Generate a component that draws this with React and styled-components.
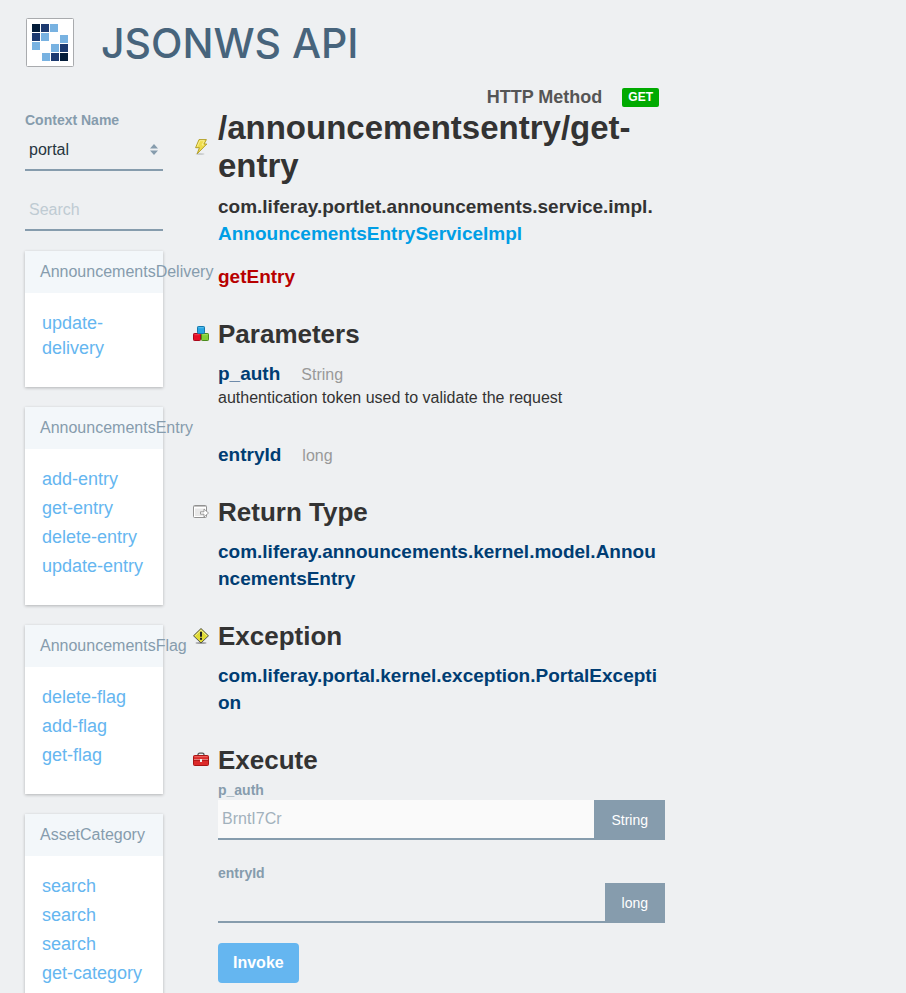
import React from "react";
import styled, { createGlobalStyle } from "styled-components";

const GlobalStyle = createGlobalStyle`
  *, *::before, *::after { box-sizing: border-box; }
  body {
    margin: 0;
    background: #eef0f2;
    color: #333;
    font-family: "Liberation Sans", Arial, sans-serif;
    font-size: 16px;
    line-height: 22px;
  }
  h1, h2, h3, h4, p, ul { margin: 0; padding: 0; }
  button, input, select { font-family: inherit; }
`;

const Page = styled.div`
  padding: 18px 25px 40px;
`;

const Banner = styled.header`
  display: flex;
  align-items: center;
  gap: 27px;
  height: 49px;
  margin-bottom: 18px;
`;

const Logo = styled.svg`
  display: block;
  flex: none;
`;

const SiteTitle = styled.h1`
  color: #47647c;
  font-family: Inter, "Liberation Sans", sans-serif;
  font-size: 41px;
  font-weight: 500;
  line-height: 48px;
`;

const Columns = styled.div`
  display: grid;
  grid-template-columns: minmax(0, 138fr) minmax(0, 472fr) minmax(0, 186fr);
  gap: 30px;
  align-items: start;
`;

const Sidebar = styled.nav`
  display: flex;
  flex-direction: column;
  gap: 20px;
  padding-top: 25px;
`;

const Field = styled.div`
  display: flex;
  flex-direction: column;
`;

const FieldLabel = styled.label`
  color: #869cad;
  font-size: 14px;
  font-weight: 700;
  line-height: 20px;
`;

const SelectBox = styled.div`
  display: grid;
  align-items: center;
  border-bottom: 2px solid #869cad;
  height: 41px;

  & > * { grid-area: 1 / 1; }
  & > svg { justify-self: end; margin-right: 5px; pointer-events: none; }
`;

const Select = styled.select`
  appearance: none;
  width: 100%;
  height: 39px;
  border: 0;
  padding: 0 20px 0 4px;
  background: transparent;
  color: #27353f;
  font-size: 16px;
`;

const TextInput = styled.input`
  width: 100%;
  min-width: 0;
  height: 40px;
  border: 0;
  border-bottom: 2px solid #869cad;
  border-radius: 0;
  padding: 0 4px;
  background: ${(p) => (p.readOnly ? "#fafafa" : "transparent")};
  color: #a2b1bc;
  font-size: 16px;

  &::placeholder { color: #bfcbd3; opacity: 1; }
`;

const Card = styled.section`
  background: #fff;
  box-shadow: 0 1px 3px rgba(0, 0, 0, 0.25);
`;

const CardTitle = styled.h4`
  padding: 0 15px;
  background: #f3f7fa;
  color: #869cad;
  font-size: 16px;
  font-weight: 400;
  line-height: 42px;
  white-space: nowrap;
`;

const LinkList = styled.ul`
  list-style: none;
  padding: 18px 17px 22px;
`;

const LinkItem = styled.li`
  margin-bottom: 4px;
  line-height: 25px;
`;

const NavLink = styled.a`
  color: #65b6f0;
  font-size: 18px;
  text-decoration: none;
`;

const Main = styled.main`
  display: flex;
  flex-direction: column;
  gap: 26px;
`;

const MethodRow = styled.div`
  display: flex;
  align-items: center;
  justify-content: flex-end;
  gap: 20px;
  height: 24px;
  padding-right: 6px;
  color: #555;
  font-size: 18px;
  font-weight: 700;
`;

const Badge = styled.span`
  padding: 0 6px;
  border-radius: 2px;
  background: #0a0;
  color: #fff;
  font-size: 12px;
  line-height: 19px;
`;

const Section = styled.section`
  display: grid;
  grid-template-columns: 16px minmax(0, 1fr);
  column-gap: 9px;
  align-items: center;
`;

const Body = styled.div`
  grid-column: 2;
  padding-top: ${(p) => (p.$tight ? "2px" : "8px")};
`;

const PathTitle = styled.h2`
  font-size: 33px;
  line-height: 38px;
`;

const SectionTitle = styled.h3`
  font-size: 26px;
  line-height: 36px;
`;

const TypeName = styled.h4`
  color: ${(p) => p.$color || "#003d73"};
  font-size: 19px;
  line-height: 27px;
  overflow-wrap: anywhere;

  & + & { margin-top: 16px; }
`;

const ClassLink = styled.a`
  display: block;
  color: #009ee5;
  text-decoration: none;
`;

const Param = styled.div`
  & + & { margin-top: 32px; }
`;

const ParamHead = styled.div`
  display: flex;
  align-items: baseline;
  gap: 21px;
  height: 27px;
  color: #999;
`;

const Description = styled.p`
  margin-bottom: 32px;
`;

const Form = styled.form`
  display: flex;
  flex-direction: column;
  align-items: stretch;
  gap: 23px;
`;

const InputGroup = styled.div`
  display: flex;
`;

const AddOn = styled.span`
  padding: 0 17px;
  background: #869cad;
  color: #fff;
  font-size: 14px;
  line-height: 40px;
`;

const InvokeButton = styled.button`
  align-self: flex-start;
  height: 40px;
  margin-top: -3px;
  padding: 0 15px;
  border: 0;
  border-radius: 4px;
  background: #65b6f0;
  color: #fff;
  font-size: 16px;
  font-weight: 700;
`;

const NAVY = "#031c39";
const BLUE = "#1c3a70";
const SKY = "#78b2e1";
const TILES = [
  [6, 6, NAVY], [15, 6, BLUE], [24, 6, SKY],
  [6, 15, BLUE], [15, 15, SKY], [34, 17, SKY],
  [6, 24, SKY], [25, 26, SKY], [34, 26, BLUE],
  [16, 35, SKY], [25, 35, BLUE], [34, 35, NAVY],
];

const LiferayLogo = () => (
  <Logo width="49" height="49" viewBox="0 0 49 49" aria-label="Liferay" role="img">
    <rect x="1.5" y=".5" width="47" height="48" rx="1" fill="#fff" stroke="#a9abae" />
    {TILES.map(([x, y, c]) => (
      <rect key={`${x}-${y}`} x={x} y={y} width="8" height="8" fill={c} transform="translate(1 0)" />
    ))}
  </Logo>
);

const Bolt = () => (
  <svg width="16" height="16" viewBox="0 0 16 16" aria-hidden="true">
    <ellipse cx="7" cy="15" rx="4.5" ry=".8" fill="#bfc2c4" />
    <path d="M6 .6h7.400L11 5h2.800L4.200 14.800 6.400 8.700H2.600z" fill="#efdc4c" stroke="#ad981f" strokeWidth=".9" strokeLinejoin="round" />
    <path d="M4.200 7.600 6.800 1.700h4.600L9 6h2" fill="none" stroke="#fbf4a0" strokeWidth=".8" />
  </svg>
);

const Bricks = () => (
  <svg width="16" height="16" viewBox="0 0 16 16" aria-hidden="true">
    <rect x=".5" y="7.5" width="7" height="7" rx=".8" fill="#e50e26" stroke="#a9081a" />
    <path d="M1.5 8.7h5" stroke="#f0404f" />
    <rect x="8.5" y="7.5" width="7" height="7" rx=".8" fill="#80ce35" stroke="#4a8a1c" />
    <path d="M9.5 8.7h5" stroke="#a0e060" />
    <rect x="4.5" y=".5" width="7" height="7" rx=".8" fill="#27a5e3" stroke="#1478ac" />
    <path d="M5.5 1.7h5" stroke="#5cc0ee" />
  </svg>
);

const ReturnIcon = () => (
  <svg width="16" height="16" viewBox="0 0 16 16" aria-hidden="true">
    <rect x=".5" y="1.5" width="13" height="12" rx="1" fill="#fff" stroke="#929292" />
    <rect x="2" y="4.500" width="10" height="7.500" fill="#e8e8e8" />
    <path d="M1 2.500h12" stroke="#c3c3c3" />
    <path d="M7.5 7.800H11V5l4.500 4L11 13v-2.800H7.5z" fill="#fff" stroke="#888" strokeWidth=".8" />
  </svg>
);

const Warning = () => (
  <svg width="16" height="16" viewBox="0 0 16 16" aria-hidden="true">
    <ellipse cx="8" cy="15" rx="5.5" ry="1" fill="#a0a2a4" />
    <path d="M8 .5 15.5 7.800 8 15 .5 7.800z" fill="#e0da35" stroke="#55564c" strokeLinejoin="round" />
    <path d="M2.200 7.800 8 2.100l5.800 5.700" fill="none" stroke="#f8f49a" strokeWidth=".8" />
    <path d="M8 3.800v5" stroke="#222" strokeWidth="2" />
    <rect x="7" y="9.800" width="2" height="2" fill="#222" />
  </svg>
);

const Toolbox = () => (
  <svg width="16" height="16" viewBox="0 0 16 16" aria-hidden="true">
    <path d="M5 4.500V2.800Q5 1.200 6.600 1.200h2.800Q11 1.200 11 2.800v1.700" fill="none" stroke="#555" strokeWidth="1.300" />
    <rect x=".5" y="3.500" width="15" height="10" rx="1" fill="#dc2a2a" stroke="#a81515" />
    <path d="M1.500 4.700h13" stroke="#ee6a64" />
    <path d="M1 7.500h14" stroke="#f4b0aa" strokeWidth=".8" />
    <path d="M1 8.300h14" stroke="#9f1414" strokeWidth=".8" />
    <rect x="7" y="7" width="2" height="3" fill="#eee" />
  </svg>
);

const Sorter = () => (
  <svg width="8" height="11" viewBox="0 0 8 11" aria-hidden="true">
    <path d="M0 4.500 4 0l4 4.500zM0 6.500h8L4 11z" fill="#869cad" />
  </svg>
);

const GROUPS = [
  ["AnnouncementsDelivery", ["update-delivery"]],
  ["AnnouncementsEntry", ["add-entry", "get-entry", "delete-entry", "update-entry"]],
  ["AnnouncementsFlag", ["delete-flag", "add-flag", "get-flag"]],
  ["AssetCategory", ["search", "search", "search", "get-category"]],
];

export default function App() {
  return (
    <>
      <GlobalStyle />
      <Page>
        <Banner>
          <LiferayLogo />
          <SiteTitle>JSONWS API</SiteTitle>
        </Banner>
        <Columns>
          <Sidebar>
            <Field>
              <FieldLabel htmlFor="context">Context Name</FieldLabel>
              <SelectBox>
                <Select id="context" defaultValue="portal">
                  <option>portal</option>
                </Select>
                <Sorter />
              </SelectBox>
            </Field>
            <TextInput type="text" placeholder="Search" aria-label="Search" />
            {GROUPS.map(([name, links]) => (
              <Card key={name}>
                <CardTitle>{name}</CardTitle>
                <LinkList>
                  {links.map((link, i) => (
                    <LinkItem key={i}>
                      <NavLink href="#">{link}</NavLink>
                    </LinkItem>
                  ))}
                </LinkList>
              </Card>
            ))}
          </Sidebar>

          <Main>
            <div>
              <MethodRow>
                HTTP Method <Badge>GET</Badge>
              </MethodRow>
              <Section>
                <Bolt />
                <PathTitle>/announcementsentry/get-entry</PathTitle>
                <Body>
                  <TypeName $color="#333">
                    com.liferay.portlet.announcements.service.impl.
                    <ClassLink href="#">AnnouncementsEntryServiceImpl</ClassLink>
                  </TypeName>
                  <TypeName $color="#b80000">getEntry</TypeName>
                </Body>
              </Section>
            </div>

            <Section>
              <Bricks />
              <SectionTitle>Parameters</SectionTitle>
              <Body>
                <ParamHead>
                  <TypeName>p_auth</TypeName>
                  <span>String</span>
                </ParamHead>
                <Description>authentication token used to validate the request</Description>
                <ParamHead>
                  <TypeName>entryId</TypeName>
                  <span>long</span>
                </ParamHead>
              </Body>
            </Section>

            <Section>
              <ReturnIcon />
              <SectionTitle>Return Type</SectionTitle>
              <Body>
                <TypeName>com.liferay.announcements.kernel.model.AnnouncementsEntry</TypeName>
              </Body>
            </Section>

            <Section>
              <Warning />
              <SectionTitle>Exception</SectionTitle>
              <Body>
                <TypeName>com.liferay.portal.kernel.exception.PortalException</TypeName>
              </Body>
            </Section>

            <Section>
              <Toolbox />
              <SectionTitle>Execute</SectionTitle>
              <Body $tight>
                <Form onSubmit={(e) => e.preventDefault()}>
                  <Field>
                    <FieldLabel htmlFor="p_auth">p_auth</FieldLabel>
                    <InputGroup>
                      <TextInput id="p_auth" type="text" readOnly value="BrntI7Cr" />
                      <AddOn>String</AddOn>
                    </InputGroup>
                  </Field>
                  <Field>
                    <FieldLabel htmlFor="entryId">entryId</FieldLabel>
                    <InputGroup>
                      <TextInput id="entryId" type="text" />
                      <AddOn>long</AddOn>
                    </InputGroup>
                  </Field>
                  <InvokeButton type="submit">Invoke</InvokeButton>
                </Form>
              </Body>
            </Section>
          </Main>
        </Columns>
      </Page>
    </>
  );
}
